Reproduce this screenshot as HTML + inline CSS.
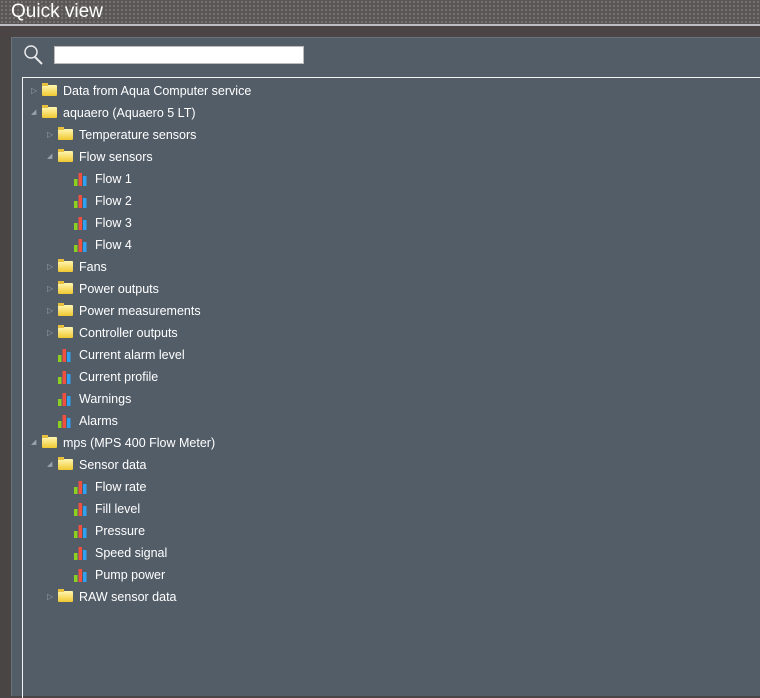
<!DOCTYPE html>
<html><head><style>
body{margin:0;width:760px;height:695px;overflow:hidden;background:#4a4545;font-family:"Liberation Sans",sans-serif;position:relative}
.hdr{position:absolute;left:0;top:0;width:760px;height:24px;background-color:#5a5656;background-image:radial-gradient(#757272 1px,transparent 1.3px);background-size:4px 4px}
.hdr span{position:absolute;left:11px;top:0;color:#fff;font-size:19px;line-height:24px}
.line{position:absolute;left:0;top:24px;width:760px;height:2px;background:#bdbdc2}
.band{position:absolute;left:0;top:26px;width:760px;height:11px;background:#4a4444}
.panel{position:absolute;left:11px;top:37px;width:749px;height:658px;background:#535d68;border-left:1px solid #6a737c;border-top:1px solid #6a737c}
.search{position:absolute;left:54px;top:46px;width:248px;height:16px;background:#fff;border:1px solid #bbb}
.tree{position:absolute;left:22px;top:77px;width:740px;height:620px;border:1px solid #f4f4f4;border-right:none;border-bottom:none}
.r{position:absolute;height:22px;line-height:22px;color:#fff;font-size:12.5px;white-space:nowrap}
.r .a{position:absolute;top:0;font-size:8px;color:#9aa2aa}
.fold{position:absolute;top:5px;width:15px;height:11px;background:linear-gradient(#fff6b0,#f0c830);border-radius:1px}
.fold:before{content:"";position:absolute;left:0;top:-2px;width:6px;height:3px;background:#e8c040}
.bars{position:absolute;top:5px;width:14px;height:13px}
</style></head><body>
<div class="hdr"><span>Quick view</span></div>
<div class="line"></div><div class="band"></div>
<div class="panel"></div>
<svg style="position:absolute;left:22px;top:44px" width="22" height="22"><circle cx="9" cy="8" r="6" fill="none" stroke="#e8e8e8" stroke-width="1.5"/><line x1="13" y1="13" x2="20" y2="20" stroke="#e8e8e8" stroke-width="2"/></svg>
<div class="search"></div>
<div class="tree"></div>
<div id="t"></div>
<script>
var rows=[[0,'c','f','Data from Aqua Computer service'],[0,'o','f','aquaero (Aquaero 5 LT)'],[1,'c','f','Temperature sensors'],[1,'o','f','Flow sensors'],[2,'','b','Flow 1'],[2,'','b','Flow 2'],[2,'','b','Flow 3'],[2,'','b','Flow 4'],[1,'c','f','Fans'],[1,'c','f','Power outputs'],[1,'c','f','Power measurements'],[1,'c','f','Controller outputs'],[1,'','b','Current alarm level'],[1,'','b','Current profile'],[1,'','b','Warnings'],[1,'','b','Alarms'],[0,'o','f','mps (MPS 400 Flow Meter)'],[1,'o','f','Sensor data'],[2,'','b','Flow rate'],[2,'','b','Fill level'],[2,'','b','Pressure'],[2,'','b','Speed signal'],[2,'','b','Pump power'],[1,'c','f','RAW sensor data']];
var h='';
rows.forEach(function(r,i){var y=80+i*22,x=31+r[0]*16;
h+='<div class="r" style="left:0;top:'+y+'px;width:300px">';
if(r[1]=='c')h+='<span class="a" style="left:'+x+'px">&#9655;</span>';
if(r[1]=='o')h+='<span class="a" style="left:'+x+'px;font-size:7px">&#9698;</span>';
if(r[2]=='f')h+='<div class="fold" style="left:'+(x+11)+'px"></div>';
else h+='<svg class="bars" style="left:'+(x+11)+'px" viewBox="0 0 14 13"><rect x="0" y="6" width="3.5" height="7" fill="#8cd020"/><rect x="4.5" y="0" width="3.5" height="13" fill="#f05040"/><rect x="9" y="3" width="3.5" height="10" fill="#30a0f0"/></svg>';
h+='<span style="position:absolute;left:'+(x+32)+'px">'+r[3]+'</span></div>';});
document.getElementById('t').innerHTML=h;
</script>
</body></html>
